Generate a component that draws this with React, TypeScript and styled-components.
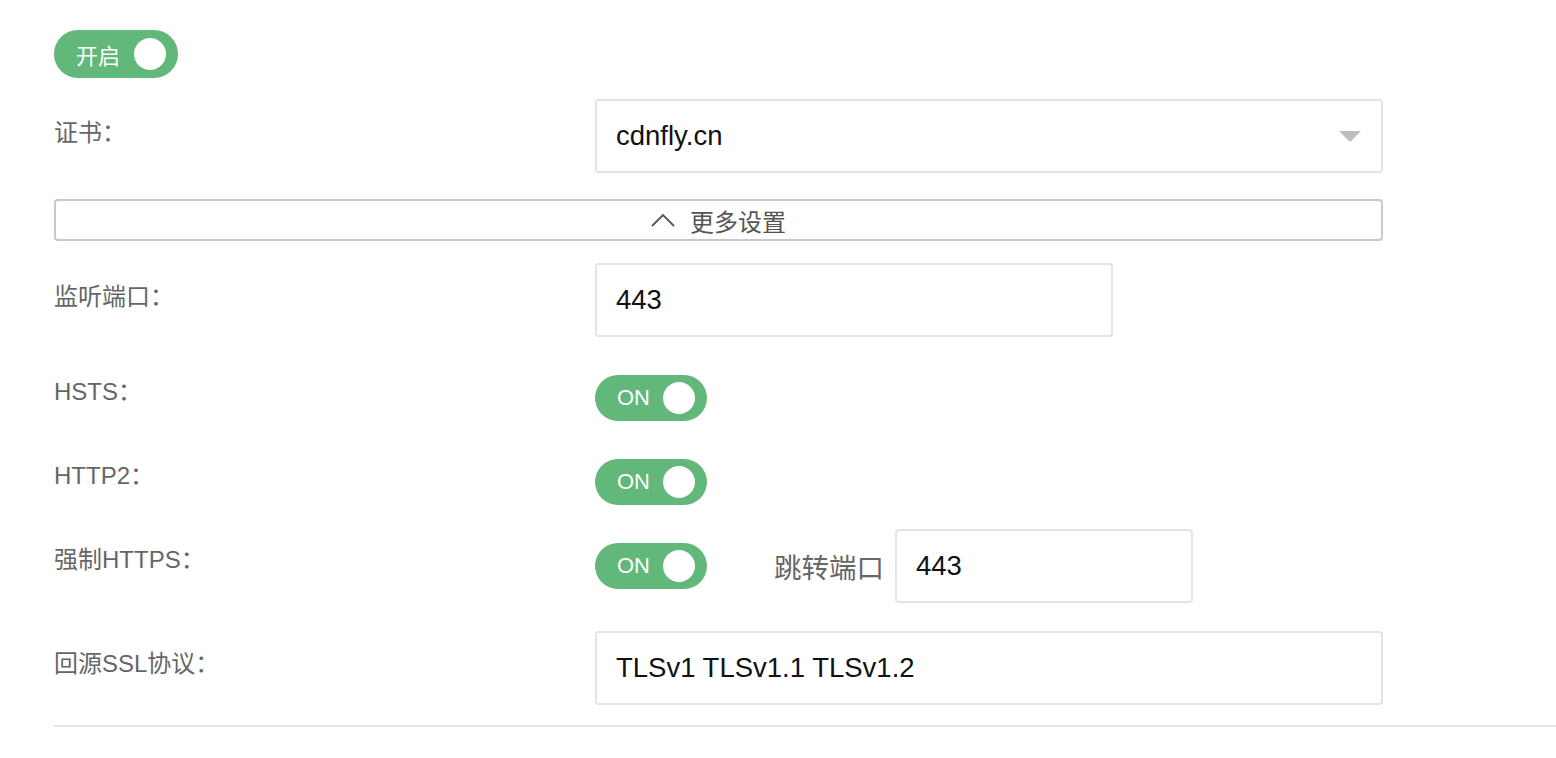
import React from "react";
import styled, { createGlobalStyle } from "styled-components";

const GREEN = "#62b77a";
const FONT = `"Liberation Sans", "Noto Sans CJK SC", sans-serif`;

const GlobalStyle = createGlobalStyle`
  html, body {
    margin: 0;
    padding: 0;
    background: #fff;
    font-family: ${FONT};
  }
`;

const Page = styled.div`
  padding: 30px 0 0 54px;
`;

const Form = styled.div`
  width: 1329px;
`;

const Switch = styled.div<{ $w: number; $h: number }>`
  display: flex;
  align-items: center;
  justify-content: space-between;
  box-sizing: border-box;
  width: ${(p) => p.$w}px;
  height: ${(p) => p.$h}px;
  border-radius: ${(p) => p.$h / 2}px;
  background: ${GREEN};
  padding: 0 12px 0 22px;
  color: #fff;
  font-size: 22px;
  cursor: pointer;
`;

const Knob = styled.span`
  width: 32px;
  height: 32px;
  border-radius: 50%;
  background: #fff;
`;

const Row = styled.div<{ $mt: number }>`
  display: flex;
  align-items: flex-start;
  margin-top: ${(p) => p.$mt}px;
`;

const Label = styled.div<{ $pt: number }>`
  width: 541px;
  flex-shrink: 0;
  padding-top: ${(p) => p.$pt}px;
  font-size: 24px;
  line-height: 34px;
  color: #666;
`;

const Field = styled.div<{ $w: number }>`
  display: flex;
  align-items: center;
  justify-content: space-between;
  box-sizing: border-box;
  width: ${(p) => p.$w}px;
  height: 74px;
  padding: 0 20px 0 19px;
  border: 2px solid #e3e3e3;
  border-radius: 4px;
  font-size: 27.5px;
  color: #111;
  background: #fff;
`;

const Caret = styled.span`
  width: 0;
  height: 0;
  border-left: 11px solid transparent;
  border-right: 11px solid transparent;
  border-top: 11px solid #bdbdbd;
`;

const MoreBar = styled.div`
  display: flex;
  align-items: center;
  justify-content: center;
  gap: 15px;
  box-sizing: border-box;
  height: 42px;
  margin-top: 26px;
  border: 2px solid #c9c9c9;
  border-radius: 4px;
  font-size: 24px;
  color: #555;
`;

const Controls = styled.div<{ $h?: number }>`
  display: flex;
  align-items: center;
  height: ${(p) => (p.$h ? `${p.$h}px` : "auto")};
`;

const SubLabel = styled.span`
  font-size: 27.5px;
  color: #666;
  margin: 0 11px 0 67px;
`;

const Divider = styled.div`
  height: 2px;
  background: #e6e6e6;
  margin-top: 20px;
  width: 1502px;
`;

const OnSwitch = () => (
  <Switch $w={112} $h={46}>
    ON
    <Knob />
  </Switch>
);

export default function App() {
  return (
    <>
      <GlobalStyle />
      <Page>
        <Form>
          <Switch $w={124} $h={48}>
            开启
            <Knob />
          </Switch>

          <Row $mt={21}>
            <Label $pt={17}>证书：</Label>
            <Field $w={788}>
              cdnfly.cn
              <Caret />
            </Field>
          </Row>

          <MoreBar>
            <svg width="24" height="14" viewBox="0 0 24 14" fill="none">
              <path d="M1 13 L12 2 L23 13" stroke="#555" strokeWidth="1.8" />
            </svg>
            更多设置
          </MoreBar>

          <Row $mt={22}>
            <Label $pt={17}>监听端口：</Label>
            <Field $w={518}>443</Field>
          </Row>

          <Row $mt={38}>
            <Label $pt={0}>HSTS：</Label>
            <OnSwitch />
          </Row>

          <Row $mt={38}>
            <Label $pt={0}>HTTP2：</Label>
            <OnSwitch />
          </Row>

          <Row $mt={24}>
            <Label $pt={14}>强制HTTPS：</Label>
            <Controls>
              <Controls $h={74}>
                <OnSwitch />
              </Controls>
              <SubLabel>跳转端口</SubLabel>
              <Field $w={298}>443</Field>
            </Controls>
          </Row>

          <Row $mt={28}>
            <Label $pt={16}>回源SSL协议：</Label>
            <Field $w={788}>TLSv1 TLSv1.1 TLSv1.2</Field>
          </Row>
        </Form>
        <Divider />
      </Page>
    </>
  );
}
